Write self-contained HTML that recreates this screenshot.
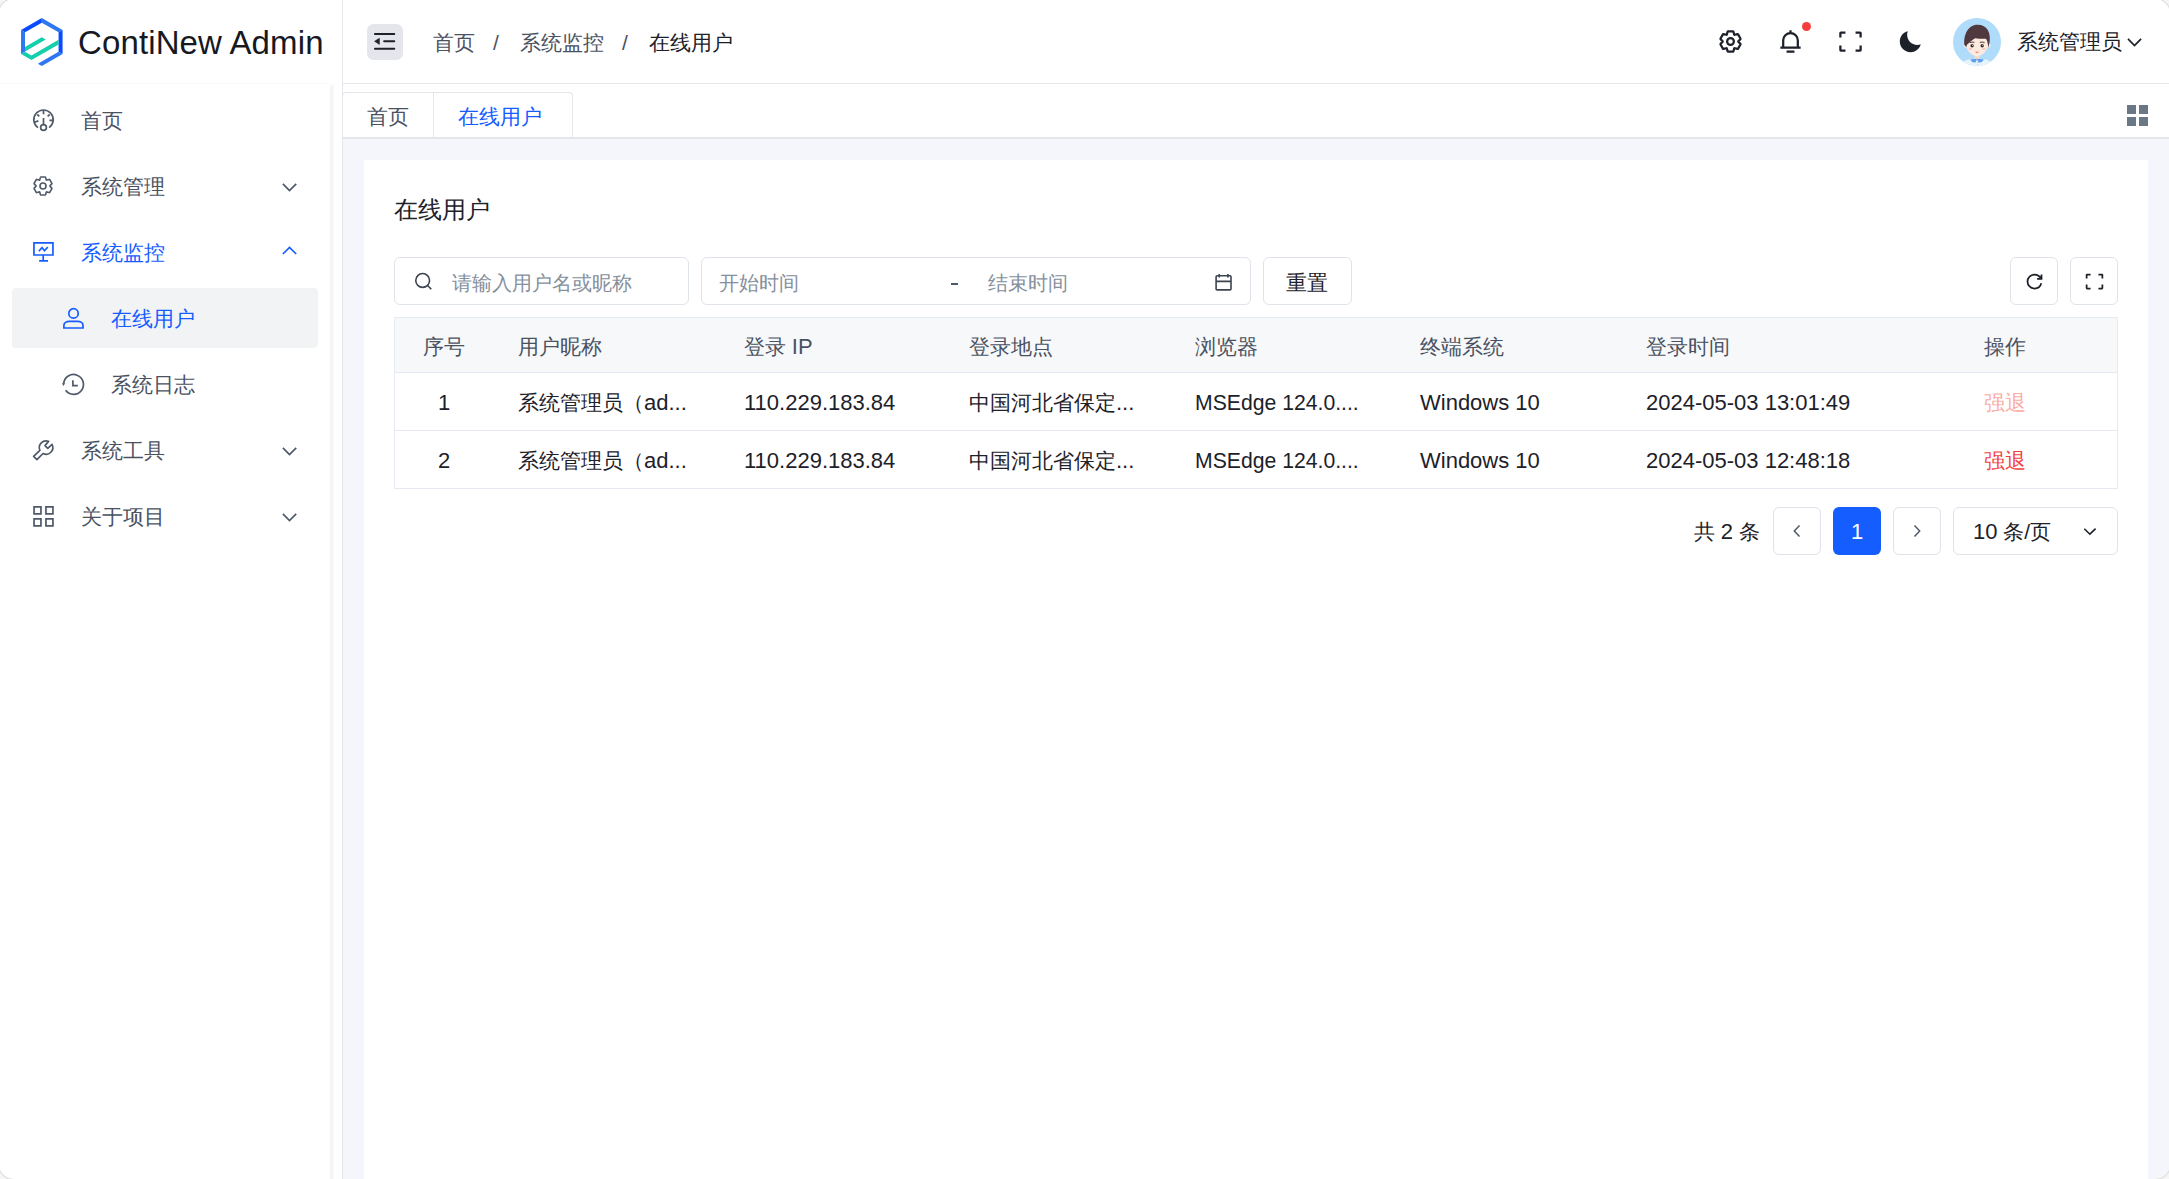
<!DOCTYPE html>
<html><head><meta charset="utf-8">
<style>
*{box-sizing:border-box;margin:0;padding:0}
html,body{width:2169px;height:1179px;overflow:hidden;background:#fff}
body{position:relative;font-family:"Liberation Sans",sans-serif;color:#1d2129;font-size:21px}
.a{position:absolute}
.t{position:absolute;white-space:nowrap;line-height:21px;height:21px}
svg{position:absolute;overflow:visible}
.ic{fill:none;stroke-width:4;stroke-linecap:butt;stroke-linejoin:miter}
.l{font-size:22px}
.g2{color:#4a5262}
.g3{color:#86909c}
.pri{color:#165dff}
.box{position:absolute;border:1px solid #dfe3ea;border-radius:6px;background:#fff}
</style></head><body>

<!-- navbar -->
<div class="a" style="left:343px;top:83px;width:1826px;height:1px;background:#e5e6eb"></div>
<div class="a" style="left:0;top:83px;width:330px;height:1px;background:#fafafa"></div>
<div class="a" style="left:342px;top:0;width:1px;height:1179px;background:#e5e6eb"></div>

<!-- logo -->
<svg style="left:0;top:0" width="84" height="84" viewBox="0 0 84 84">
<polygon fill="#0a4bff" points="21.02,30.05 41.80,18.05 41.80,22.67 25.02,32.36"/>
<polygon fill="#2f77f1" points="41.80,18.05 62.58,30.05 58.58,32.36 41.80,22.67"/>
<polygon fill="#0a4bff" points="62.58,30.05 62.58,54.05 58.58,51.74 58.58,32.36"/>
<polygon fill="#2f77f1" points="62.58,54.05 41.80,66.05 37.80,63.74 58.58,51.74"/>
<polygon fill="#2f77f1" points="21.02,30.05 21.02,54.05 25.02,51.74 25.02,32.36"/>
<polygon fill="#13cfab" points="21.02,54.05 31.45,60.07 58.58,44.41 58.58,39.79 31.45,55.46 25.02,51.74"/>
<polygon fill="#13cfab" points="25.02,51.54 45.80,39.54 41.70,37.29 25.02,46.92"/>
</svg>
<div class="t" style="left:78px;top:26px;font-size:33px;line-height:33px;height:33px;color:#16191f;letter-spacing:0.12px">ContiNew Admin</div>

<!-- toggle -->
<div class="a" style="left:367px;top:24px;width:36px;height:36px;border-radius:6.5px;background:#e5e6eb"></div>
<svg style="left:366px;top:22px" width="40" height="40" viewBox="0 0 40 40"><path d="M8.9 12H28.3M18.1 19.3H28.3M8.9 26.8H28.3" stroke="#1d2129" stroke-width="1.9" stroke-linecap="round" fill="none"/><path d="M8.6 19.3L13.4 16.3V22.4Z" fill="#1d2129" stroke="#1d2129" stroke-width="0.6" stroke-linejoin="round"/></svg>

<!-- breadcrumb -->
<div class="t g2" style="left:433px;top:32px">首页</div>
<div class="t g2" style="left:493px;top:32px">/</div>
<div class="t g2" style="left:520px;top:32px">系统监控</div>
<div class="t g2" style="left:622px;top:32px">/</div>
<div class="t" style="left:649px;top:32px">在线用户</div>

<!-- right icons -->
<svg style="left:1717px;top:28px" width="27" height="27" viewBox="0 0 48 48"><g class="ic" stroke="#1d2129"><path d="M18.797 6.732A1 1 0 0 1 19.76 6h8.48a1 1 0 0 1 .964.732l1.285 4.628a1 1 0 0 0 1.213.7l4.651-1.2a1 1 0 0 1 1.116.468l4.24 7.344a1 1 0 0 1-.153 1.2L38.193 23.3a1 1 0 0 0 0 1.402l3.364 3.427a1 1 0 0 1 .153 1.2l-4.24 7.344a1 1 0 0 1-1.116.468l-4.65-1.2a1 1 0 0 0-1.214.7l-1.285 4.628a1 1 0 0 1-.964.732h-8.48a1 1 0 0 1-.963-.732L17.51 36.64a1 1 0 0 0-1.213-.7l-4.65 1.2a1 1 0 0 1-1.116-.468l-4.24-7.344a1 1 0 0 1 .153-1.2L9.809 24.7a1 1 0 0 0 0-1.402l-3.364-3.427a1 1 0 0 1-.153-1.2l4.24-7.344a1 1 0 0 1 1.116-.468l4.65 1.2a1 1 0 0 0 1.213-.7l1.286-4.628Z"/><path d="M30 24a6 6 0 1 1-12 0 6 6 0 0 1 12 0Z"/></g></svg>
<svg style="left:1777px;top:28px" width="27" height="27" viewBox="0 0 48 48"><path class="ic" stroke="#1d2129" d="M24 9c7.18 0 13 5.82 13 13v13H11V22c0-7.18 5.82-13 13-13Zm0 0V4M6 35h36m-25 7h14"/></svg>
<div class="a" style="left:1801.5px;top:22.3px;width:9px;height:9px;border-radius:50%;background:#f53f3f"></div>
<svg style="left:1837px;top:28px" width="27" height="27" viewBox="0 0 48 48"><path class="ic" stroke="#1d2129" d="M42 17V9a1 1 0 0 0-1-1h-8M6 17V9a1 1 0 0 1 1-1h8m27 23v8a1 1 0 0 1-1 1h-8M6 31v8a1 1 0 0 0 1 1h8"/></svg>
<svg style="left:1897px;top:28px" width="27" height="27" viewBox="0 0 48 48"><path fill="#1d2129" d="M42.108 29.769c.124-.387-.258-.736-.645-.613A17.99 17.99 0 0 1 36 30c-9.941 0-18-8.059-18-18 0-1.904.296-3.74.844-5.463.123-.387-.226-.768-.613-.645C10.558 8.334 5 15.518 5 24c0 10.493 8.507 19 19 19 8.482 0 15.666-5.558 18.108-13.231Z"/></svg>

<!-- avatar -->
<svg style="left:1953px;top:18px" width="48" height="48" viewBox="0 0 48 48">
  <defs><clipPath id="av"><circle cx="24" cy="24" r="24"/></clipPath></defs>
  <g clip-path="url(#av)">
    <rect width="48" height="48" fill="#afdcfa"/>
    <path d="M6 48 Q10 42 18 41 L24 43 L30 41 Q38 42 42 48Z" fill="#e6f4fd"/>
    <rect x="21.5" y="36" width="5" height="6" fill="#fbd9c4"/>
    <circle cx="12.6" cy="27.5" r="2" fill="#fde6d9"/><circle cx="35.6" cy="27.5" r="2" fill="#fde6d9"/>
    <path d="M13 24 C13 30 15 36.5 24 38.4 C33 36.5 35.2 30 35.2 24 C35.2 19 31 16 24 16 C17 16 13 19 13 24Z" fill="#fdeadf"/>
    <path d="M11.4 27 C10.4 17 15 6.8 24.5 6.8 C33.5 6.8 38 14 36.6 24 L35.4 29.5 C34.8 25 34 22 33 20.8 C29 21 25 20.5 22 20.2 C19 22.5 16.5 24 14 26.8 L13.3 29Z" fill="#4f393e"/>
    <path d="M16.6 24.6 Q19 23.6 21.4 24.4 M26.8 24.4 Q29.2 23.6 31.6 24.6" stroke="#4f393e" stroke-width="1" fill="none"/>
    <circle cx="19.1" cy="27.7" r="1.7" fill="#3b2b31"/><circle cx="29.2" cy="27.7" r="1.7" fill="#3b2b31"/>
    <circle cx="19.6" cy="27.2" r="0.5" fill="#fff"/><circle cx="29.7" cy="27.2" r="0.5" fill="#fff"/>
    <ellipse cx="17.3" cy="31" rx="1.8" ry="1" fill="#f7c6c0"/><ellipse cx="31" cy="31" rx="1.8" ry="1" fill="#f7c6c0"/>
    <path d="M21.9 33.8 H26.1 Q24 36 21.9 33.8Z" fill="#ee6868"/>
    <path d="M17 41.5 L24 40.8 L22.5 44.5 Q19 45 17 41.5Z M31 41.5 L24 40.8 L25.5 44.5 Q29 45 31 41.5Z" fill="#5d9df0"/>
    <circle cx="24.5" cy="44.6" r="0.6" fill="#f2d23c"/><circle cx="24.5" cy="46.6" r="0.6" fill="#f2d23c"/>
  </g>
</svg>
<div class="t" style="left:2017px;top:31px">系统管理员</div>
<svg style="left:2119px;top:26px" width="32" height="32" viewBox="0 0 32 32"><path d="M9 12.8L15.5 19.6L22.1 12.8" stroke="#1d2129" stroke-width="1.7" fill="none"/></svg>

<!-- sidebar -->
<div class="a" style="left:330px;top:88px;width:3px;height:1091px;background:#f5f5f5"></div>
<div class="a" style="left:333px;top:88px;width:1px;height:1091px;background:#f9f9f9"></div>
<div class="a" style="left:330px;top:84px;width:4px;height:4px;background:linear-gradient(#fcfcfc,#f5f5f5)"></div>

<!-- menu items -->
<svg style="left:28px;top:104px" width="32" height="32" viewBox="0 0 32 32"><path d="M9.9 23.6 A9.7 9.7 0 1 1 21.1 23.6" fill="none" stroke="#4e5969" stroke-width="1.7" /><path d="M15.5 6.6V10.2M9.3 10.5L11.3 12.3M21.7 10.5L19.6 12.3M6.5 18.2L10.4 16.9M21.4 16.4H25M15.5 13.9V20.6" fill="none" stroke="#4e5969" stroke-width="1.7" /><circle cx="15.5" cy="23.5" r="2.9" fill="none" stroke="#4e5969" stroke-width="1.7"/></svg>
<div class="t g2" style="left:81px;top:110px">首页</div>
<svg style="left:31.4px;top:173.6px" width="24" height="24" viewBox="0 0 48 48"><g fill="none" stroke="#4e5969" stroke-width="3.3"><path d="M18.797 6.732A1 1 0 0 1 19.76 6h8.48a1 1 0 0 1 .964.732l1.285 4.628a1 1 0 0 0 1.213.7l4.651-1.2a1 1 0 0 1 1.116.468l4.24 7.344a1 1 0 0 1-.153 1.2L38.193 23.3a1 1 0 0 0 0 1.402l3.364 3.427a1 1 0 0 1 .153 1.2l-4.24 7.344a1 1 0 0 1-1.116.468l-4.65-1.2a1 1 0 0 0-1.214.7l-1.285 4.628a1 1 0 0 1-.964.732h-8.48a1 1 0 0 1-.963-.732L17.51 36.64a1 1 0 0 0-1.213-.7l-4.65 1.2a1 1 0 0 1-1.116-.468l-4.24-7.344a1 1 0 0 1 .153-1.2L9.809 24.7a1 1 0 0 0 0-1.402l-3.364-3.427a1 1 0 0 1-.153-1.2l4.24-7.344a1 1 0 0 1 1.116-.468l4.65 1.2a1 1 0 0 0 1.213-.7l1.286-4.628Z"/><path d="M30 24a6 6 0 1 1-12 0 6 6 0 0 1 12 0Z"/></g></svg>
<div class="t g2" style="left:81px;top:176px">系统管理</div>
<svg style="left:276px;top:172px" width="28" height="28" viewBox="0 0 28 28"><path d="M6.9 11.8L13.5 18.5L20.2 11.8" fill="none" stroke="#4e5969" stroke-width="1.7" /></svg>
<svg style="left:28px;top:236px" width="32" height="32" viewBox="0 0 32 32"><path d="M5.95 6.95H24.95V19H5.95Z" fill="none" stroke="#165dff" stroke-width="1.7" /><path d="M15.2 19V24.8M11.1 24.8H20" fill="none" stroke="#165dff" stroke-width="1.7" /><path d="M10.8 15.2L14 11.6L16.4 14.8L19.8 11.2" fill="none" stroke="#165dff" stroke-width="1.7" /></svg>
<div class="t pri" style="left:81px;top:242px">系统监控</div>
<svg style="left:276px;top:238px" width="28" height="28" viewBox="0 0 28 28"><path d="M6.9 16L13.5 9.5L20.2 16" fill="none" stroke="#165dff" stroke-width="1.7" /></svg>
<div class="a" style="left:12px;top:288px;width:306px;height:60px;border-radius:4px;background:#f2f3f5"></div>
<svg style="left:58px;top:302px" width="32" height="32" viewBox="0 0 32 32"><circle cx="15.5" cy="11.4" r="4.7" fill="none" stroke="#165dff" stroke-width="1.7"/><path d="M5.9 26V23.4C5.9 21 8.4 19.4 11.5 19.4H19.5C22.6 19.4 25 21 25 23.4V26Z" fill="none" stroke="#165dff" stroke-width="1.7" /></svg>
<div class="t pri" style="left:111px;top:308px">在线用户</div>
<svg style="left:58px;top:368px" width="32" height="32" viewBox="0 0 32 32"><path d="M5.7 15.6A9.9 9.9 0 1 1 7.6 22.3" fill="none" stroke="#4e5969" stroke-width="1.7" /><path d="M3.9 15.2H7.1L5.5 17.9Z" fill="#4e5969"/><path d="M14.9 12.3V17.6H19.8" fill="none" stroke="#4e5969" stroke-width="1.7" /></svg>
<div class="t g2" style="left:111px;top:374px">系统日志</div>
<svg style="left:28px;top:434px" width="32" height="32" viewBox="0 0 32 32"><path d="M11.9 16.3A6.7 6.7 0 0 1 20.6 7.4L17.0 11.6L19.8 14.4L24.0 10.4A6.7 6.7 0 0 1 15.0 19.5L8.9 25.6L5.6 22.4Z" fill="none" stroke="#4e5969" stroke-width="1.7" stroke-linejoin="round"/></svg>
<div class="t g2" style="left:81px;top:440px">系统工具</div>
<svg style="left:276px;top:436px" width="28" height="28" viewBox="0 0 28 28"><path d="M6.9 11.8L13.5 18.5L20.2 11.8" fill="none" stroke="#4e5969" stroke-width="1.7" /></svg>
<svg style="left:28px;top:500px" width="32" height="32" viewBox="0 0 32 32"><path d="M6.05 6.95H12.95V13.95H6.05ZM17.95 6.95H24.95V13.95H17.95ZM6.05 18.9H12.95V25.85H6.05ZM17.95 18.9H24.95V25.85H17.95Z" fill="none" stroke="#4e5969" stroke-width="1.7" /></svg>
<div class="t g2" style="left:81px;top:506px">关于项目</div>
<svg style="left:276px;top:502px" width="28" height="28" viewBox="0 0 28 28"><path d="M6.9 11.8L13.5 18.5L20.2 11.8" fill="none" stroke="#4e5969" stroke-width="1.7" /></svg>

<!-- content bg -->
<div class="a" style="left:343px;top:139px;width:1826px;height:1040px;background:#f5f6fc"></div>
<!-- tabs row -->
<div class="a" style="left:343px;top:84px;width:1826px;height:55px;background:#fff;border-bottom:2px solid #e5e6eb"></div>
<div class="a" style="left:342px;top:92px;width:92px;height:46px;border:1px solid #e5e6eb;border-bottom:none;border-radius:4px 0 0 0"></div>
<div class="a" style="left:433px;top:92px;width:140px;height:46px;border:1px solid #e5e6eb;border-bottom:none;border-radius:0 4px 0 0"></div>
<div class="t g2" style="left:367px;top:106px">首页</div>
<div class="t pri" style="left:458px;top:106px">在线用户</div>
<svg style="left:2127px;top:105px" width="21" height="21" viewBox="0 0 21 21"><g fill="#6b7785"><rect x="0" y="0" width="9" height="9"/><rect x="12" y="0" width="9" height="9"/><rect x="0" y="12" width="9" height="9"/><rect x="12" y="12" width="9" height="9"/></g></svg>

<!-- card -->
<div class="a" style="left:364px;top:160px;width:1784px;height:1019px;background:#fff"></div>
<div class="t" style="left:394px;top:198px;font-size:24px;line-height:24px;height:24px">在线用户</div>

<!-- filters -->
<div class="box" style="left:394px;top:257px;width:295px;height:48px"></div>
<svg style="left:408px;top:265px" width="32" height="32" viewBox="0 0 32 32"><circle cx="14.66" cy="15.47" r="6.9" stroke="#3d4450" stroke-width="1.6" fill="none"/><path d="M19.6 20.5L23.3 24.2" stroke="#3d4450" stroke-width="1.6" fill="none"/></svg>
<div class="t g3" style="left:452px;top:273px;font-size:19.5px">请输入用户名或昵称</div>

<div class="box" style="left:701px;top:257px;width:550px;height:48px"></div>
<div class="t g3" style="left:719px;top:273px;font-size:19.5px">开始时间</div>
<div class="a" style="left:951px;top:283px;width:7px;height:2px;background:#4e5969"></div>
<div class="t g3" style="left:988px;top:273px;font-size:19.5px">结束时间</div>
<svg style="left:1207px;top:265px" width="32" height="32" viewBox="0 0 32 32"><path d="M10.1 10.8H23A1 1 0 0 1 24 11.8V23.9A1 1 0 0 1 23 24.9H10.1A1 1 0 0 1 9.1 23.9V11.8A1 1 0 0 1 10.1 10.8ZM9.1 16.4H24M12.2 9V12.5M20.9 9V12.5" stroke="#3d4450" stroke-width="1.6" fill="none"/></svg>

<div class="box" style="left:1263px;top:257px;width:89px;height:48px"></div>
<div class="t" style="left:1286px;top:272px">重置</div>

<div class="box" style="left:2010px;top:257px;width:48px;height:48px"></div>
<svg style="left:2024.3px;top:271px" width="21" height="21" viewBox="0 0 48 48"><path class="ic" stroke="#1d2129" d="M38.837 18C36.463 12.136 30.715 8 24 8 15.163 8 8 15.163 8 24s7.163 16 16 16c7.455 0 13.72-5.1 15.496-12M40 8v10H30"/></svg>
<div class="box" style="left:2070px;top:257px;width:48px;height:48px"></div>
<svg style="left:2084px;top:270.9px" width="21" height="21" viewBox="0 0 48 48"><path class="ic" stroke="#1d2129" d="M42 17V9a1 1 0 0 0-1-1h-8M6 17V9a1 1 0 0 1 1-1h8m27 23v8a1 1 0 0 1-1 1h-8M6 31v8a1 1 0 0 0 1 1h8"/></svg>

<!-- table -->
<div class="a" style="left:394px;top:317px;width:1724px;height:172px;border:1px solid #e6e9f1"></div>
<div class="a" style="left:395px;top:318px;width:1722px;height:54px;background:#f7f8fa"></div>
<div class="a" style="left:395px;top:372px;width:1722px;height:1px;background:#e6e9f1"></div>
<div class="a" style="left:395px;top:430px;width:1722px;height:1px;background:#e6e9f1"></div>

<div class="t g2" style="left:423px;top:336px">序号</div>
<div class="t g2" style="left:518px;top:336px">用户昵称</div>
<div class="t g2" style="left:744px;top:336px">登录 <span class="l">IP</span></div>
<div class="t g2" style="left:969px;top:336px">登录地点</div>
<div class="t g2" style="left:1195px;top:336px">浏览器</div>
<div class="t g2" style="left:1420px;top:336px">终端系统</div>
<div class="t g2" style="left:1646px;top:336px">登录时间</div>
<div class="t g2" style="left:1984px;top:336px">操作</div>

<div class="t l" style="left:438px;top:392px">1</div>
<div class="t" style="left:518px;top:392px">系统管理员（<span class="l">ad...</span></div>
<div class="t l" style="left:744px;top:392px">110.229.183.84</div>
<div class="t" style="left:969px;top:392px">中国河北省保定<span class="l">...</span></div>
<div class="t l" style="left:1195px;top:392px;font-size:21.2px">MSEdge 124.0....</div>
<div class="t l" style="left:1420px;top:392px">Windows 10</div>
<div class="t l" style="left:1646px;top:392px">2024-05-03 13:01:49</div>
<div class="t" style="left:1984px;top:392px;color:#fbaca3">强退</div>

<div class="t l" style="left:438px;top:450px">2</div>
<div class="t" style="left:518px;top:450px">系统管理员（<span class="l">ad...</span></div>
<div class="t l" style="left:744px;top:450px">110.229.183.84</div>
<div class="t" style="left:969px;top:450px">中国河北省保定<span class="l">...</span></div>
<div class="t l" style="left:1195px;top:450px;font-size:21.2px">MSEdge 124.0....</div>
<div class="t l" style="left:1420px;top:450px">Windows 10</div>
<div class="t l" style="left:1646px;top:450px">2024-05-03 12:48:18</div>
<div class="t" style="left:1984px;top:450px;color:#f53f3f">强退</div>

<!-- pagination -->
<div class="t" style="left:1694px;top:521px">共 <span class="l">2</span> 条</div>
<div class="box" style="left:1773px;top:507px;width:48px;height:48px"></div>
<svg style="left:1781px;top:515px" width="32" height="32" viewBox="0 0 32 32"><path d="M18.5 10.5L13.3 16L18.5 21.6" stroke="#4e5969" stroke-width="1.5" fill="none"/></svg>
<div class="a" style="left:1833px;top:507px;width:48px;height:48px;border-radius:6px;background:#165dff"></div>
<div class="t l" style="left:1851px;top:521px;color:#fff">1</div>
<div class="box" style="left:1893px;top:507px;width:48px;height:48px"></div>
<svg style="left:1901px;top:515px" width="32" height="32" viewBox="0 0 32 32"><path d="M13.5 10.5L18.7 16L13.5 21.6" stroke="#4e5969" stroke-width="1.5" fill="none"/></svg>
<div class="box" style="left:1953px;top:507px;width:165px;height:48px"></div>
<div class="t" style="left:1973px;top:521px"><span class="l">10</span> 条/页</div>
<svg style="left:2074px;top:515px" width="32" height="32" viewBox="0 0 32 32"><path d="M10.3 13.7L15.9 19.2L21.6 13.7" stroke="#1d2129" stroke-width="1.6" fill="none"/></svg>

<div class="a" style="left:-0.6px;top:-0.6px;width:2170.5px;height:1180px;border-radius:15px;box-shadow:0 0 0 1.2px #e2e2e2,0 0 0 30px #f6f6f6;z-index:10"></div>
</body></html>
